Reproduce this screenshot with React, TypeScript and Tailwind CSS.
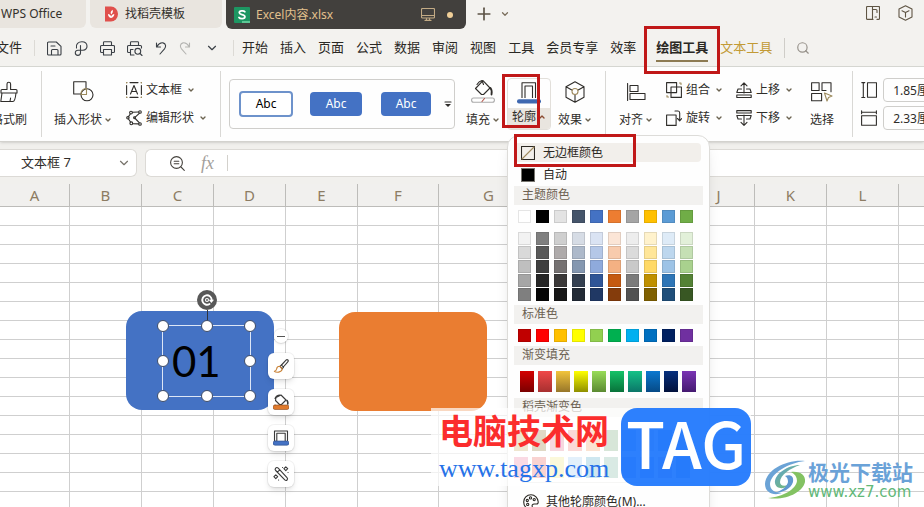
import type { ReactNode } from "react";
import { ChevronDown, ChevronUp, Plus, Search } from "lucide-react";
import { clsx } from "clsx";

const menuTabs = ["开始", "插入", "页面", "公式", "数据", "审阅", "视图", "工具", "会员专享", "效率"];

const columns = [
    { name: "A", width: "w-[70px]" },
    { name: "B", width: "w-[72px]" },
    { name: "C", width: "w-[72px]" },
    { name: "D", width: "w-[72px]" },
    { name: "E", width: "w-[72px]" },
    { name: "F", width: "w-[81px]" },
    { name: "G", width: "w-[100px]" },
    { name: "H", width: "w-[72px]" },
    { name: "I", width: "w-[72px]" },
    { name: "J", width: "w-[72px]" },
    { name: "K", width: "w-[72px]" },
    { name: "L", width: "w-[72px]" },
    { name: "M", width: "w-[72px]" },
];

const themeColors = ["#ffffff", "#000000", "#e3e3e3", "#44546a", "#4472c4", "#ed7d31", "#a5a5a5", "#ffc000", "#5b9bd5", "#70ad47"];

const themeShades = [
    ["#f2f2f2", "#d9d9d9", "#bfbfbf", "#a6a6a6", "#7f7f7f"],
    ["#7f7f7f", "#595959", "#3f3f3f", "#262626", "#050505"],
    ["#cfcfcf", "#aeaaaa", "#757171", "#3a3838", "#161616"],
    ["#d6dce5", "#adb9ca", "#8497b0", "#333f50", "#222a35"],
    ["#dae3f3", "#b4c7e7", "#8faadc", "#2f5597", "#203864"],
    ["#fbe5d6", "#f8cbad", "#f4b183", "#c55a11", "#843c0c"],
    ["#ededed", "#dbdbdb", "#c9c9c9", "#7b7b7b", "#525252"],
    ["#fff2cc", "#ffe699", "#ffd966", "#bf9000", "#7f6000"],
    ["#deebf7", "#bdd7ee", "#9dc3e6", "#2e75b6", "#1f4e79"],
    ["#e2f0d9", "#c5e0b4", "#a9d18e", "#548235", "#385723"],
];

const standardColors = ["#c00000", "#ff0000", "#ffc000", "#ffff00", "#92d050", "#00b050", "#00b0f0", "#0070c0", "#002060", "#7030a0"];

const gradients = [
    ["#d40000", "#7a0000"],
    ["#f04848", "#a83030"],
    ["#f2c43c", "#97762a"],
    ["#ffff00", "#8f8f00"],
    ["#98dc58", "#5b8a32"],
    ["#14c268", "#08723a"],
    ["#14c287", "#0b7668"],
    ["#0b78d0", "#064a86"],
    ["#06307e", "#02113c"],
    ["#7a34b4", "#451a70"],
];

const softColorsTop = ["#c8ac60", "#98803c", "#e07c90", "#ee8078", "#f2a068", "#78ac7c", "#2f62d8", "#8f8fb0", "#1c3fa0", "#a88cb4"];
const softColorsBottom = ["#ee84a4", "#ec6c64", "#f2e684", "#a0cef0", "#5cb0cc", "#80b8a4", "#2c5cc8", "#2858c8", "#6858a8", "#083cb0"];

function Icon({ w, h, className, children }: { w: number; h: number; className?: string; children: ReactNode }) {
    return (
        <svg
            width={w}
            height={h}
            viewBox={`0 0 ${w} ${h}`}
            fill="none"
            stroke="currentColor"
            strokeWidth="1.1"
            strokeLinecap="round"
            strokeLinejoin="round"
            aria-hidden="true"
            className={clsx("shrink-0", className)}
        >
            {children}
        </svg>
    );
}

function Caret({ up }: { up?: boolean }) {
    return up
        ? <ChevronUp className="w-2 h-2 shrink-0 text-[#8a4a30]" strokeWidth={4} />
        : <ChevronDown className="w-2 h-2 shrink-0 text-[#6b6350]" strokeWidth={4} />;
}

function TitleBar() {
    return (
        <div className="flex h-[30px] items-start bg-[#f3f2ef] text-xs text-[#33302b]">
            <button className="h-7 w-[86px] shrink-0 rounded-br-md bg-[#e9e5df] text-left pl-px">WPS Office</button>
            <button className="ml-1 flex h-7 w-[132px] shrink-0 items-center rounded-b-md bg-[#e9e5df] pl-[14px]">
                <Icon w={14} h={16} className="mr-[7px]">
                    <path d="M1 0.5H7a7 7.5 0 0 1 0 15H1z" fill="#e0504c" stroke="none" />
                    <path d="M4 8c0 2 1 3.500 3 4 2.200-.5 3.300-2 3.300-4-1.500.2-2.500 1-3.100 2.500C6.500 9.200 5.500 8.200 4 8z" fill="#fff" stroke="none" />
                    <path d="M7.200 8.500C6 6.500 7 4.800 8.600 3.800c.6 1.700.2 3.300-1.400 4.700z" fill="#fff" stroke="none" />
                </Icon>
                找稻壳模板
            </button>
            <button className="ml-1 flex h-[29px] w-[240px] shrink-0 items-center rounded-b-md bg-[#42403d] pl-2 text-[#e3c18d]">
                <Icon w={16} h={16} className="mr-[6px]">
                    <rect width="16" height="16" rx="1" fill="#1d9662" stroke="none" />
                    <path d="M8 14h8v2H8z" fill="#5dc795" stroke="none" />
                    <path d="M10.800 4.800C10 3.600 5.200 3.300 5.300 5.800c.1 2.300 5.600 1.200 5.600 3.900 0 2.600-4.900 2.400-5.900.8" stroke="#fff" strokeWidth="1.800" />
                </Icon>
                Excel内容.xlsx
                <Icon w={14} h={13} className="ml-auto mr-3 text-[#c3ab85]">
                    <rect x="0.500" y="0.500" width="13" height="9.500" rx="1" />
                    <path d="M1 7.500h12M5.500 10.500v1.500M8.500 10.500v1.500M4 12.400h6" />
                </Icon>
                <span className="mr-[13px] h-[6px] w-[6px] rounded-full bg-[#f0cf98]" />
            </button>
            <button aria-label="新建" className="ml-2 mt-1">
                <Plus className="h-5 w-5 text-[#5c5346]" strokeWidth={2} />
            </button>
            <button aria-label="更多标签" className="ml-[6px] mt-[9px]">
                <ChevronDown className="h-[10px] w-[10px] text-[#7a6e5c]" strokeWidth={3} />
            </button>
            <button aria-label="侧栏" className="ml-auto mt-[6px] text-[#5f5544]">
                <Icon w={14} h={14}>
                    <path d="M7 13.400H1.500a1 1 0 0 1-1-1v-11a1 1 0 0 1 1-1h11a1 1 0 0 1 1 1v11a1 1 0 0 1-1 1H11M6.500 0.500v13" />
                    <path d="M6.500 3.500H10a1 1 0 0 1 1 1v2M9 11h1.500" />
                </Icon>
            </button>
            <button aria-label="应用" className="ml-[18px] mr-[11px] mt-[5px] text-[#5f5544]">
                <Icon w={15} h={16}>
                    <path d="M7.500 0.700 14 4v8l-6.500 3.300L1 12V4zM4 5.700l3.500 1.800L11 5.700M7.500 7.500V12" />
                </Icon>
            </button>
        </div>
    );
}

function MenuBar() {
    return (
        <div className="relative z-20 flex h-[37px] items-center border-b border-[#d5d6d1] bg-[#f3f2ef] text-[13px] text-[#2a2824]">
            <button className="-ml-1 shrink-0">文件</button>
            <div className="ml-3 h-4 w-px shrink-0 bg-[#dcdad5]" />
            <div className="ml-[12px] flex shrink-0 items-center gap-3 text-[#3b4046]">
                <button aria-label="保存">
                    <Icon w={15} h={15}>
                        <path d="M5 14H1.500a1 1 0 0 1-1-1V2a1 1 0 0 1 1-1h7.800L14 5.300V13a1 1 0 0 1-1 1h-2M4 5h4M4.500 14V9.500a1 1 0 0 1 1-1H10a1 1 0 0 1 1 1V14z" />
                    </Icon>
                </button>
                <button aria-label="输出">
                    <Icon w={14} h={15}>
                        <path d="M2.500 7C1.500 3 4.500.8 8 .8c6.500 0 6.500 8.400 1 8.400H7M6.500 4.500v7.300a2.600 2.600 0 1 1-2.600-2.600h3" />
                    </Icon>
                </button>
                <button aria-label="打印">
                    <Icon w={15} h={15}>
                        <path d="M3.500 4.500v-3a.8.8 0 0 1 .8-.8h6.400a.8.8 0 0 1 .8.800v3M3.500 11.500h-2a1 1 0 0 1-1-1v-5a1 1 0 0 1 1-1h12a1 1 0 0 1 1 1v5a1 1 0 0 1-1 1h-2M3.500 8.500h8v5.500h-8z" />
                    </Icon>
                </button>
                <button aria-label="打印预览">
                    <Icon w={16} h={15}>
                        <path d="M3.500 4.500v-3a.8.8 0 0 1 .8-.8h6.400a.8.8 0 0 1 .8.800v3M3.500 11.500h-2a1 1 0 0 1-1-1v-5a1 1 0 0 1 1-1h12a1 1 0 0 1 1 1V7M6 8.500H3.500V14H7" />
                        <circle cx="10.800" cy="10.300" r="2.900" />
                        <path d="m13 12.500 2 2" />
                    </Icon>
                </button>
                <button aria-label="撤销">
                    <Icon w={12} h={15}>
                        <path d="M1.500 2v4h4M1.700 5.700c2-3 4-4.300 6.300-3.800 3 .8 3.300 3.800 1.500 6L5 13" />
                    </Icon>
                </button>
                <button aria-label="恢复" className="text-[#b5b5b2]">
                    <Icon w={12} h={15}>
                        <path d="M10.500 2v4h-4M10.300 5.700c-2-3-4-4.300-6.300-3.800C1 2.700.7 5.700 2.500 7.900L7 13" />
                    </Icon>
                </button>
                <button aria-label="更多命令" className="ml-[2px]">
                    <ChevronDown className="h-[14px] w-[14px]" strokeWidth={2} />
                </button>
            </div>
            <div className="ml-[14px] h-4 w-px shrink-0 bg-[#dcdad5]" />
            <nav className="ml-2 flex shrink-0 items-center gap-3">
                {menuTabs.map((tab) => (
                    <button key={tab}>{tab}</button>
                ))}
            </nav>
            <div className="relative ml-5 shrink-0">
                <button className="border-b-2 border-[#8c7a52] pb-[2px] pt-1 font-bold">绘图工具</button>
                {/* Callout for the active tab */}
                <span className="pointer-events-none absolute -inset-x-3 -bottom-3 -top-2 border-[3px] border-[#c01818]" />
            </div>
            <button className="ml-3 shrink-0 text-[#c29a35]">文本工具</button>
            <div className="ml-3 h-5 w-px shrink-0 bg-[#cfcdc8]" />
            <button aria-label="搜索" className="ml-[11px]">
                <Search className="h-[14px] w-[14px] text-[#96918a]" strokeWidth={2} />
            </button>
        </div>
    );
}

function BigTool({ icon, label, caret = true }: { icon: ReactNode; label: string; caret?: boolean }) {
    return (
        <button className="flex h-[51px] shrink-0 flex-col items-center justify-between pb-[2px] pt-[1px]">
            <span className="flex h-6 items-center">{icon}</span>
            <span className="flex items-center gap-[2px] leading-4">
                {label}
                {caret && <Caret />}
            </span>
        </button>
    );
}

function SmallTool({ icon, label }: { icon: ReactNode; label: string }) {
    return (
        <button className="flex h-6 items-center gap-1">
            {icon}
            <span>{label}</span>
            <span className="ml-px"><Caret /></span>
        </button>
    );
}

function Divider() {
    return <div className="h-[66px] w-px shrink-0 bg-[#d9d8d5]" />;
}

function SectionTitle({ children, className }: { children: ReactNode; className?: string }) {
    return <div className={clsx("h-[19px] bg-[#f2f1ef] pl-2 leading-[17px] text-[#6c6152]", className)}>{children}</div>;
}

function Swatch({ color }: { color: string }) {
    return (
        <button
            aria-label={color}
            className="block h-[13px] w-[13px] border border-black/10"
            style={{ background: color }}
        />
    );
}

function OutlineMenu() {
    return (
        <div className="absolute left-0 top-[57px] w-[203px] rounded-xl border border-[#dddcd9] bg-[#fefefe] px-[6px] pb-2 pt-[7px] text-xs text-[#2b2823] shadow-lg">
            <button className="flex h-[19px] w-[187px] items-center rounded bg-[#f2efeb] pl-[7px]">
                <Icon w={14} h={14} className="mr-2">
                    <path d="M.5.5h13v13H.5z" />
                    <path d="m1 13 12-12" stroke="#a08c60" />
                </Icon>
                无边框颜色
            </button>
            <button className="mt-[2px] flex h-[22px] items-center pl-[7px]">
                <span className="mr-2 h-[14px] w-[14px] border border-[#77756f] bg-black" />
                自动
            </button>
            <SectionTitle>主题颜色</SectionTitle>
            <div className="mt-[5px] flex gap-[5px] pl-1">
                {themeColors.map((c) => <Swatch key={c} color={c} />)}
            </div>
            <div className="mt-[9px] flex gap-[5px] pl-1">
                {themeShades.map((shades, i) => (
                    <div key={i} className="flex flex-col gap-px">
                        {shades.map((c) => <Swatch key={c} color={c} />)}
                    </div>
                ))}
            </div>
            <SectionTitle className="mt-1">标准色</SectionTitle>
            <div className="mt-[5px] flex gap-[5px] pl-1">
                {standardColors.map((c) => <Swatch key={c} color={c} />)}
            </div>
            <SectionTitle className="mt-1">渐变填充</SectionTitle>
            <div className="mt-[6px] flex gap-1 pl-[6px]">
                {gradients.map(([from, to]) => (
                    <button
                        key={from}
                        aria-label={`${from} ${to}`}
                        className="h-[21px] w-[14px]"
                        style={{ background: `linear-gradient(${from}, ${to})` }}
                    />
                ))}
            </div>
            <SectionTitle className="mt-[6px]">稻壳渐变色</SectionTitle>
            {[softColorsTop, softColorsBottom].map((row, i) => (
                <div key={i} className={clsx("flex gap-1", i === 0 ? "mt-[13px]" : "mt-[6px]")}>
                    {row.map((c) => (
                        <button key={c} aria-label={c} className="h-[21px] w-[14px]" style={{ background: c }} />
                    ))}
                </div>
            ))}
            <div className="mx-2 mt-1 h-px bg-[#e2e1de]" />
            <button className="flex h-[38px] items-center pl-[9px]">
                <Icon w={16} h={16} className="mr-[7px]">
                    <path d="M8 .8C3.800.8.700 4 .700 8s3 7.200 7 7.200c2.200 0 2-1.600 1.600-2.500-.6-1.600.3-2.700 1.900-2.700h2.300c1.300 0 1.800-.9 1.700-2.200C14.900 3.800 11.900.8 8 .8z" />
                    <circle cx="4.300" cy="6.500" r="1.100" />
                    <circle cx="7.500" cy="3.900" r="1.100" />
                    <circle cx="11.200" cy="5.600" r="1.100" />
                    <circle cx="4.700" cy="10.400" r="1.100" />
                </Icon>
                其他轮廓颜色(M)...
            </button>
            {/* Callout for the "no border" entry */}
            <span className="pointer-events-none absolute left-[6px] top-[-2px] h-[33px] w-[122px] border-[3px] border-[#c01818]" />
        </div>
    );
}

function Ribbon() {
    return (
        <div className="relative z-10 flex h-[75px] items-center border-b border-[#d3d2ce] bg-[#fefefe] text-xs text-[#2f2d2a] shadow-sm">
            <div className="-ml-[9px] w-[50px] shrink-0">
                <BigTool
                    label="格式刷"
                    caret={false}
                    icon={
                        <Icon w={20} h={22}>
                            <path d="M8 8.500V3a1.800 1.800 0 0 1 3.600 0v5.500h5.400a1 1 0 0 1 1 1V12H2V9.500a1 1 0 0 1 1-1zM3 12 1.800 20.500H14c1.500 0 2.500-4 3-8.500M11 20.500l.6-3.500" />
                        </Icon>
                    }
                />
            </div>
            <Divider />
            <div className="ml-3 flex shrink-0 items-center gap-[14px]">
                <BigTool
                    label="插入形状"
                    icon={
                        <Icon w={21} h={21}>
                            <path d="M8 13H.7V.7H13V7" />
                            <circle cx="14" cy="13.800" r="6" />
                            <path d="M8 13.500c0-4 2-6 5.500-6v6z" stroke="#9c8a5c" />
                        </Icon>
                    }
                />
                <div className="flex flex-col gap-1">
                    <SmallTool
                        label="文本框"
                        icon={
                            <Icon w={16} h={16}>
                                <path d="M.6 3.500v9M15.400 3.500v9M4 .6h8M4 15.400h8M4.500 12 8 3.500l3.500 8.500M5.500 9.500h5" />
                                <path d="M.6.6h.1M15.400.6h.1M.6 15.400h.1M15.400 15.400h.1" stroke="#9c8a5c" strokeWidth="1.800" />
                            </Icon>
                        }
                    />
                    <SmallTool
                        label="编辑形状"
                        icon={
                            <Icon w={16} h={16}>
                                <path d="M6.400 2.300 12.600 2M4.300 4 2.500 6.600M2.500 9l2 3M6.800 13.700l5.800.2M13.300 3.300 9.200 7.200M9.200 8.500l4 4.200" />
                                <circle cx="5" cy="2.600" r="1.400" />
                                <circle cx="1.900" cy="7.800" r="1.200" />
                                <circle cx="5.300" cy="13.300" r="1.400" />
                                <circle cx="14" cy="2" r="1.300" />
                                <circle cx="14" cy="14" r="1.300" />
                                <circle cx="8.500" cy="7.800" r=".9" />
                            </Icon>
                        }
                    />
                </div>
            </div>
            <div className="ml-[13px]"><Divider /></div>
            <div className="ml-2 flex h-[50px] w-[226px] shrink-0 items-center rounded-sm border border-[#cfcecb] pl-[9px]">
                <button className="h-[26px] w-[54px] rounded border-2 border-[#6d92cb] bg-white text-black">Abc</button>
                <button className="ml-[17px] h-6 w-[52px] rounded bg-[#4472c4] text-white">Abc</button>
                <button className="ml-[19px] h-6 w-[50px] rounded bg-[#4472c4] text-white">Abc</button>
                <button aria-label="更多样式" className="ml-auto mr-[2px]">
                    <Icon w={8} h={7}>
                        <path d="M1 1h6" />
                        <path d="M1 3h6L4 6z" fill="currentColor" stroke="none" />
                    </Icon>
                </button>
            </div>
            <div className="ml-[11px] flex shrink-0 items-center">
                <BigTool
                    label="填充"
                    icon={
                        <Icon w={24} h={23}>
                            <path d="M6 4.500c1.500-2.500 3-3.500 5-4 M12 .700 19 8l-6.500 6.500h-2L4.500 8.500z M11 .500l1.500 4" />
                            <path d="M19.500 8c1.500 2 1.500 4 1 6.500" strokeWidth="1.800" />
                            <rect x=".6" y="18" width="22.800" height="4.300" rx="2" stroke="#aaa" />
                            <path d="m11 21.500 2.500-3" stroke="#b3544a" />
                        </Icon>
                    }
                />
                <div className="relative ml-[7px]">
                    <button className="flex h-[52px] w-[44px] flex-col overflow-hidden rounded border border-[#e2dfda]">
                        <span className="flex h-[29px] w-full items-end justify-center pb-1">
                            <Icon w={24} h={22}>
                                <path d="M5 16V.7h13.500V16M8 16V4h7.500v12" strokeLinecap="butt" />
                                <rect y="17.300" width="24" height="4.200" rx="2" fill="#3f68b0" stroke="none" />
                            </Icon>
                        </span>
                        <span className="flex w-full flex-1 items-center justify-center gap-[2px] bg-[#e9e5df] pb-[3px]">
                            轮廓
                            <Caret up />
                        </span>
                    </button>
                    <OutlineMenu />
                    {/* Callout for the outline button */}
                    <span className="pointer-events-none absolute -left-[5px] -top-1 h-[54px] w-[38px] border-[3px] border-[#c01818]" />
                </div>
                <div className="ml-[7px]">
                    <BigTool
                        label="效果"
                        icon={
                            <Icon w={20} h={22}>
                                <path d="M10 .7 19 5.700v10.600l-9 5-9-5V5.700zM1 5.700l5.800 3.300M19 5.700l-5.800 3.300M10 13.800v7.500" />
                                <circle cx="10" cy="10.500" r="3" stroke="#a08c60" />
                            </Icon>
                        }
                    />
                </div>
            </div>
            <div className="ml-[13px]"><Divider /></div>
            <div className="ml-[13px] flex shrink-0 items-center gap-[13px]">
                <BigTool
                    label="对齐"
                    icon={
                        <Icon w={19} h={18}>
                            <path d="M.6.500v17M3 2.500h8v6H3zM3 10.500h15v6H3z" />
                        </Icon>
                    }
                />
                <div className="flex flex-col gap-1">
                    <SmallTool
                        label="组合"
                        icon={
                            <Icon w={16} h={16}>
                                <path d="M.6.600h10v10h-10zM5 5h10.400v10.400H5z" />
                                <path d="M1 13.500v1.500h1.500M13.500 1H15v1.500" stroke="#9c8a5c" />
                            </Icon>
                        }
                    />
                    <SmallTool
                        label="旋转"
                        icon={
                            <Icon w={16} h={16}>
                                <path d="M.6 5h9.500v10.400H.6zM9 1h3c1.500 0 1.700 1 1.700 2v7.500M11.500 8.500l2.200 2.300 2-2.300" />
                            </Icon>
                        }
                    />
                </div>
                <div className="flex flex-col gap-1">
                    <SmallTool
                        label="上移"
                        icon={
                            <Icon w={16} h={16}>
                                <path d="M8 11V1M5 3.800 8 .8l3 3M5.500 7H2l-1.200 3.500h14.400L14 7h-3.500M.8 13h14.400v2.500H.8z" />
                            </Icon>
                        }
                    />
                    <SmallTool
                        label="下移"
                        icon={
                            <Icon w={16} h={16}>
                                <path d="M8 5v10M5 12.300l3 3 3-3M5.500 9H2L.8 5.500h14.400L14 9h-3.500M.8.600h14.400V3H.8z" />
                            </Icon>
                        }
                    />
                </div>
                <div className="ml-1">
                    <BigTool
                        label="选择"
                        caret={false}
                        icon={
                            <Icon w={22} h={20}>
                                <path d="M.6 8.500V.7h7.500v7.800zM11 .7h9v9M11 .7v7.800h4M.6 11.500v7.300h10M.6 11.500h10v7.300" />
                                <path d="m13.500 11 7.500 3-3.500 1.500L16 19z" stroke="#9c8a5c" />
                            </Icon>
                        }
                    />
                </div>
            </div>
            <div className="ml-[18px]"><Divider /></div>
            <div className="ml-2 flex shrink-0 flex-col gap-1">
                <label className="flex h-6 items-center gap-[6px]">
                    <Icon w={16} h={16}>
                        <path d="M.8.600h3M2.300.600v15M.8 15.600h3M6.500.700h9v14.600h-9z" />
                    </Icon>
                    <input aria-label="高度" defaultValue="1.85厘米" className="h-6 w-20 rounded border border-[#cfcecb] pl-[9px]" />
                </label>
                <label className="flex h-6 items-center gap-[6px]">
                    <Icon w={16} h={16}>
                        <path d="M.6.800v3M.6 2.300h14.800M15.400.800v3M.6 5.700h14.800v9.600H.6z" />
                    </Icon>
                    <input aria-label="宽度" defaultValue="2.33厘米" className="h-6 w-20 rounded border border-[#cfcecb] pl-[9px]" />
                </label>
            </div>
        </div>
    );
}

function FormulaBar() {
    return (
        <div className="flex h-[42px] items-center gap-2 bg-[#f1f0ed] text-[13px] text-[#2f2d2a]">
            <div className="flex h-7 w-[137px] shrink-0 items-center rounded-r-md border border-l-0 border-[#dcdad6] bg-white pr-[5px]">
                <input aria-label="名称框" defaultValue="文本框 7" className="w-full min-w-0 pl-[21px] outline-none" />
                <ChevronDown className="h-[14px] w-[14px] shrink-0 text-[#77736b]" strokeWidth={2} />
            </div>
            <div className="flex h-7 min-w-0 flex-1 items-center rounded-l-md border border-r-0 border-[#dcdad6] bg-white pl-6">
                <Icon w={15} h={15} className="text-[#45423d]">
                    <circle cx="6.500" cy="6.500" r="5.900" />
                    <path d="m11 11 3.300 3.300M4.200 5.300h4.600M4.200 7.700h4.600" />
                </Icon>
                <span className="ml-4 font-['Liberation_Serif',serif] text-lg italic leading-6 text-[#a3a09b]">fx</span>
                <div className="ml-[13px] h-4 w-px shrink-0 bg-[#d3d1cc]" />
                <input aria-label="编辑栏" className="min-w-0 flex-1 px-2 outline-none" />
            </div>
        </div>
    );
}

function Grid() {
    return (
        <table className="w-[971px] table-fixed border-separate border-spacing-0">
            <thead>
                <tr>
                    {columns.map((c) => (
                        <th
                            key={c.name}
                            className={clsx(
                                "h-[23px] border-b border-r border-[#bdbcb9] bg-[#f1f0ee] p-0 text-[15px] font-normal leading-[22px] text-[#8d7c63]",
                                c.width
                            )}
                        >
                            {c.name}
                        </th>
                    ))}
                </tr>
            </thead>
            <tbody>
                {Array.from({ length: 40 }, (_, r) => (
                    <tr key={r}>
                        {columns.map((c) => (
                            <td key={c.name} className="h-[19px] border-b border-r border-[#cfcfcf] bg-white p-0" />
                        ))}
                    </tr>
                ))}
            </tbody>
        </table>
    );
}

const handles = [
    "left-0 top-0", "left-1/2 top-0", "left-full top-0",
    "left-0 top-1/2", "left-full top-1/2",
    "left-0 top-full", "left-1/2 top-full", "left-full top-full",
];

function Shapes() {
    return (
        <>
            <div className="absolute left-[126px] top-[127px] h-[99px] w-[148px] rounded-2xl bg-[#4472c4]">
                <div className="absolute left-9 top-[14px] flex h-[72px] w-[89px] items-center border border-[#dde6f6] pl-[9px] font-['Lato',sans-serif] text-[42px] leading-none text-black">
                    01
                    <span className="absolute left-1/2 -top-4 h-4 w-px bg-[#30343c]" />
                    {handles.map((pos) => (
                        <span
                            key={pos}
                            className={clsx("absolute h-3 w-3 -translate-x-1/2 -translate-y-1/2 rounded-full border border-[#3f4d68] bg-white", pos)}
                        />
                    ))}
                    <span className="absolute -top-9 left-1/2 flex h-5 w-5 -translate-x-1/2 items-center justify-center rounded-full bg-[#585858] text-white">
                        <Icon w={14} h={14}>
                            <path d="M9.500 11A4.700 4.700 0 1 1 11.700 7" strokeWidth="1.900" />
                            <path d="M8.700 6.800h5.300L11.400 10z" fill="currentColor" stroke="none" />
                            <circle cx="7" cy="7" r="1.500" />
                        </Icon>
                    </span>
                </div>
            </div>
            <div className="absolute left-[339px] top-[128px] h-[99px] w-[148px] rounded-2xl bg-[#ea7d31]" />
        </>
    );
}

function FloatingTools() {
    const button = "flex h-[26px] w-[26px] items-center justify-center rounded-md bg-white text-[#3a3a3a] shadow-md ring-1 ring-black/5";
    return (
        <div className="absolute left-[268px] top-[145px] flex flex-col items-center gap-[10px]">
            <button aria-label="收起" className="flex h-[14px] w-[14px] items-center justify-center rounded-full bg-white shadow ring-1 ring-black/5">
                <span className="h-px w-2 bg-[#555]" />
            </button>
            <button aria-label="格式刷" className={button}>
                <Icon w={16} h={16}>
                    <path d="M8.500 7 13 2.200c1.300-1.300 3 .2 1.800 1.600L10.300 9z" />
                    <path d="M8.500 7 7 8.300l2.200 2.500 1.300-1.600" />
                    <path d="M6.800 8.300c-2 0-3 1-3.200 2.700-.2 1.400-1 2-2.200 2.300 1.500 1.400 7.600 1.600 7.800-2.500z" stroke="#c98338" />
                </Icon>
            </button>
            <button aria-label="填充" className={button}>
                <Icon w={16} h={16}>
                    <path d="M3 3.500 8 1l5 5-4.500 4.500h-2L2.500 6.500zM2 4.500C3 1.500 5 1 7 1" />
                    <path d="M14 6.500c1 1.500 1 2.500.7 3.500" strokeWidth="1.600" />
                    <rect y="11" width="16" height="4.500" rx="2" fill="#e07a2c" stroke="#8a4a1c" strokeWidth=".6" />
                </Icon>
            </button>
            <button aria-label="轮廓" className={button}>
                <Icon w={16} h={16}>
                    <path d="M1.500 11V1h13v10M3.800 11V3.300h8.400V11" strokeLinecap="butt" />
                    <rect y="11" width="16" height="4.200" rx="2" fill="#4472c4" stroke="#2c4c88" strokeWidth=".6" />
                </Icon>
            </button>
            <button aria-label="美化" className={button}>
                <Icon w={16} h={16}>
                    <path d="M2.500 2.300c.9-1 2-.9 2.700-.2l8.800 9.600c1.500 1.700-.6 3.700-2.200 2.200L2.700 4.500c-.7-.7-.8-1.500-.2-2.200zM4.300 6.200l2.500-2.400" />
                    <path d="m12.800.8 1.900 1.900-1.900 1.900-1.900-1.900zM2.800 8.800l1.900 1.900-1.900 1.900-1.900-1.900zM9.500 1.500h.1M15 6.500h.1M5.500 14h.1" />
                </Icon>
            </button>
        </div>
    );
}

function TagBanner() {
    return (
        <div className="pointer-events-none absolute left-[431px] top-[408px] z-30 flex h-[78px] w-[320px] bg-white/70">
            <div className="w-[190px] shrink-0 pl-[8px]">
                <p className="mt-[3px] whitespace-nowrap text-[34px] font-bold leading-10 text-[#fb2d2d]">电脑技术网</p>
                <p className="whitespace-nowrap font-['Liberation_Serif',serif] text-[26px] leading-9 text-[#2672e8]">www.tagxp.com</p>
            </div>
            <div className="flex flex-1 items-center justify-center rounded-2xl bg-[#1672fd]/90 pb-3 font-['Noto_Sans_CJK_SC',sans-serif] text-[64px] font-medium leading-none text-white">
                TAG
            </div>
        </div>
    );
}

function SiteMark() {
    return (
        <div className="pointer-events-none absolute bottom-[6px] right-[11px] z-30 flex items-center gap-[2px]">
            <svg width="42" height="42" viewBox="0 0 42 42" aria-hidden="true">
                <defs>
                    <linearGradient id="swirl" x1="0" y1="0" x2="1" y2="1">
                        <stop offset="0" stopColor="#5ca0d8" />
                        <stop offset="1" stopColor="#7cc25c" />
                    </linearGradient>
                </defs>
                <path d="M41 2C24 0 2 10 1 25c0 9 9 12 17 9-7 0-12-3-12-9C7 14 24 4 41 2z" fill="#6ba3d6" />
                <path d="M36 6C24 6 10 15 11 24c1 6 9 7 13 2-5 2-8 0-8-3 0-7 11-14 20-17z" fill="url(#swirl)" />
                <path d="M27 13c9-1 15 3 14 10C39 33 22 42 4 39c15-1 28-9 29-17 0-4-2-7-6-9z" fill="#83c262" />
                <path d="M21 17c6-2 9 1 8 6-2 7-11 11-19 11 7-2 13-6 14-11 0-3-1-5-3-6z" fill="#5f97cf" />
            </svg>
            <div>
                <p className="text-[21px] font-bold leading-6 text-[#6aa2d8]">极光下载站</p>
                <p className="font-['DejaVu_Sans',sans-serif] text-[15px] leading-4 text-[#62b878]">www.xz7.com</p>
            </div>
        </div>
    );
}

export default function App() {
    return (
        <div className="relative flex h-screen w-full flex-col overflow-hidden bg-white font-['Noto_Sans','Noto_Sans_CJK_SC',sans-serif]">
            <TitleBar />
            <MenuBar />
            <Ribbon />
            <FormulaBar />
            <main className="relative min-h-0 flex-1 overflow-hidden">
                <Grid />
                <Shapes />
                <FloatingTools />
            </main>
            <TagBanner />
            <SiteMark />
        </div>
    );
}
